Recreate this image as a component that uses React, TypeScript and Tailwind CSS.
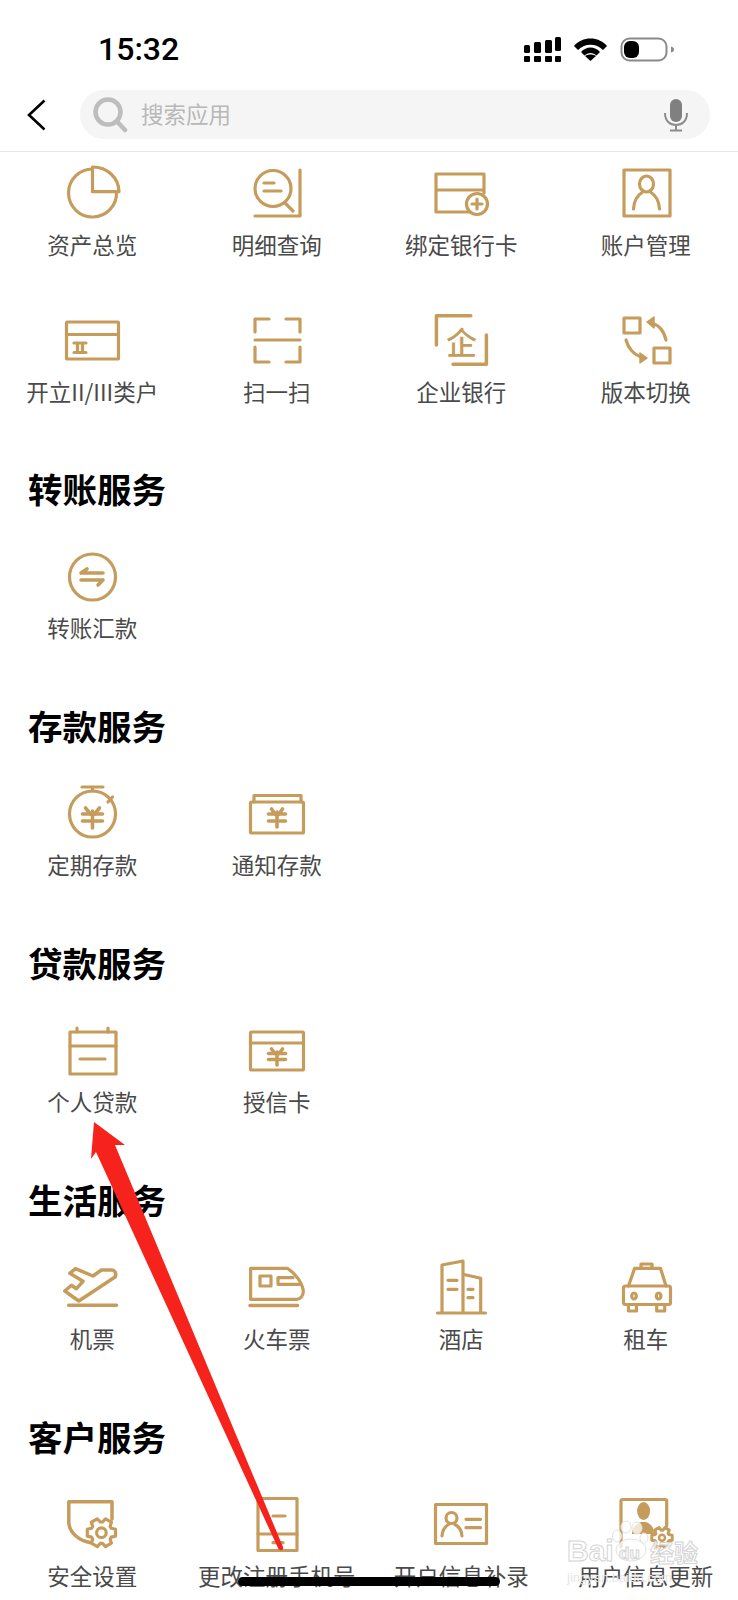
import React from 'react';

const gold = '#c59c5b';

const Glyph = ({ children }: { children: React.ReactNode }) => (
  <svg
    width="60"
    height="60"
    viewBox="0 0 60 60"
    fill="none"
    stroke={gold}
    strokeWidth="3.2"
    strokeLinecap="round"
    strokeLinejoin="round"
  >
    {children}
  </svg>
);

// yen sign used by the deposit / credit icons
const Yen = ({ x, y, w, h, gap }: { x: number; y: number; w: number; h: number; gap: number }) => (
  <g strokeWidth="3.6">
    <path d={`M${x} ${y + 4} V${y + h}`} />
    <path d={`M${x - w} ${y + h / 2 - gap / 2} H${x + w}`} />
    <path d={`M${x - w} ${y + h / 2 + gap / 2} H${x + w}`} />
    <path d={`M${x - w + 3} ${y + 1} L${x - 2} ${y + h / 2 - gap / 2}`} />
    <path d={`M${x + w - 3} ${y + 1} L${x + 2} ${y + h / 2 - gap / 2}`} />
  </g>
);

// outline of a six lobed cog
const gearPath = (cx: number, cy: number, outer: number, inner: number) => {
  const pts: string[] = [];
  for (let i = 0; i < 6; i++) {
    const a = (Math.PI / 3) * i;
    const at = (r: number, d: number) =>
      `${(cx + r * Math.cos(a + d)).toFixed(1)} ${(cy + r * Math.sin(a + d)).toFixed(1)}`;
    pts.push(`${i === 0 ? 'M' : 'L'}${at(inner, -0.42)}`, `L${at(outer, -0.24)}`, `L${at(outer, 0.24)}`, `L${at(inner, 0.42)}`);
  }
  return pts.join(' ') + 'Z';
};

const icons: Record<string, React.ReactNode> = {
  pie: (
    <>
      <path d="M30.5 9A24 24 0 1 0 54.5 32" />
      <path d="M30.5 7V31.7H57A26 25 0 0 0 30.5 7Z" />
    </>
  ),
  detail: (
    <>
      <circle cx="26" cy="28.5" r="18" />
      <path d="M17 23H27M17 31H34M38 43L46 51M53 10V56H8" />
    </>
  ),
  card: (
    <>
      <path d="M44 52H5V14H53V33M5 30H53" />
      <circle cx="46" cy="44" r="10.5" fill="#fff" />
      <path d="M41 44H51M46 39V49" />
    </>
  ),
  account: (
    <>
      <rect x="8" y="10" width="46" height="46" />
      <ellipse cx="30.5" cy="24" rx="7" ry="8" />
      <path d="M17.5 49C18 40 22 35 26 32.5M43.5 49C43 40 39 35 35 32.5" />
    </>
  ),
  classII: (
    <>
      <rect x="4.5" y="15" width="52" height="37" rx="1" />
      <path d="M4.5 27.5H56.5M12 36H24M12 45.5H24M15.5 36V45.5M20.5 36V45.5" />
    </>
  ),
  scan: <path d="M22 12H8V25M39 12H53V25M8 33H53M8 40V55H22M53 40V55H39" />,
  company: (
    <>
      <path d="M39.8 8.7H5.4V38M55.4 28V57.3H22" strokeWidth="3.5" />
      <text
        x="30.4"
        y="47"
        textAnchor="middle"
        fontSize="31"
        fontWeight="500"
        fill={gold}
        stroke="none"
        fontFamily='"Noto Sans CJK SC", sans-serif'
      >
        企
      </text>
    </>
  ),
  swap: (
    <>
      <rect x="8" y="11" width="16" height="15" />
      <rect x="38" y="41" width="16" height="15" />
      <path d="M35 16C43 18 48 24 50 33M10 33C12 41 18 48 26 50" />
      <path d="M31 15L38 10V21Z" fill={gold} strokeWidth="1.5" />
      <path d="M31 51L24 46V56Z" fill={gold} strokeWidth="1.5" />
    </>
  ),
  transfer: (
    <>
      <circle cx="30.5" cy="31" r="23" />
      <path d="M19 27H41M19 27L25 23M19 34H41M41 34L36 39" strokeWidth="3.6" />
    </>
  ),
  timer: (
    <>
      <circle cx="30.5" cy="31" r="23" />
      <path d="M20 4H41M30.5 4V8M46 19L50.5 14" />
      <Yen x={30.5} y={24} w={10} h={21} gap={7} />
    </>
  ),
  notice: (
    <>
      <rect x="3.5" y="19" width="53" height="31" rx="1" />
      <path d="M7 19V12.5H54V19" />
      <Yen x={30} y={25} w={8.5} h={19} gap={7} />
    </>
  ),
  loan: (
    <>
      <rect x="8" y="12" width="46" height="42" />
      <path d="M8 26H54M18 39H43M15 8V12M46 8V12" />
    </>
  ),
  credit: (
    <>
      <rect x="3.5" y="12" width="53" height="38" rx="1" />
      <path d="M3.5 23H56.5" />
      <Yen x={30} y={28} w={8.5} h={17} gap={6} />
    </>
  ),
  plane: (
    <>
      <path d="M13.4 11.7L7.8 16.3L21 24.3L14.4 31.7L9.4 28.3L2.8 34L16.8 44L53.4 19.7C54.5 16 52.5 13 50 13H39.4L31 19Z" strokeWidth="3.5" />
      <path d="M6.8 48.3H54.4" strokeWidth="3.6" />
    </>
  ),
  train: (
    <>
      <path d="M3.6 11.3H40.3C48 16 55.5 26 56.3 34C56.5 39 53 42.3 50 42.3H3.6Z" />
      <rect x="13" y="19" width="11" height="10" />
      <path d="M46 20.7H31V27.3H52" />
      <path d="M3 48.5H50.5" strokeWidth="3.5" />
    </>
  ),
  hotel: (
    <>
      <path d="M11 56V8L32 4V56M32 17.3L49.7 21.3V56M6.5 56H54.5" />
      <path d="M17 23.3H26M17 32.3H26M37 32.3H42M37 40.7H42" />
    </>
  ),
  taxi: (
    <>
      <path d="M25 11V7H36V11M12.5 29L18.6 11.3H44.5L50 29" />
      <rect x="7.5" y="29" width="47" height="18.5" rx="2" />
      <ellipse cx="18" cy="39" rx="2.3" ry="3" />
      <ellipse cx="42.6" cy="39" rx="2.3" ry="3" />
      <path d="M12.5 47.5V54H20.5V47.5M40.7 47.5V54H48.7V47.5" />
    </>
  ),
  shield: (
    <>
      <path d="M50 25V7.7H6.8V28.7C7.5 38 16 47 29.4 48.7" strokeWidth="3.5" />
      <path d={gearPath(39.4, 38.7, 14.5, 10.8)} fill="#fff" strokeWidth="3.2" />
      <circle cx="39.4" cy="38.7" r="4.8" strokeWidth="3.2" />
    </>
  ),
  phone: (
    <>
      <rect x="11" y="4.5" width="39" height="52" />
      <path d="M11 40H50M26 22H38M26 48.7H36" />
    </>
  ),
  idcard: (
    <>
      <rect x="4.5" y="10.5" width="51" height="39" />
      <circle cx="20.5" cy="24" r="5.5" />
      <path d="M11 42C11.5 35 15 32 17.5 30.5M31 42C30.5 35 27 32 24 30.5M35 25.3H49.5M35 33.7H49.5" />
    </>
  ),
  userUpdate: (
    <>
      <path d="M5 53V7C5 6 6 5.5 7 5.5H49C50 5.5 50.7 6 50.7 7V32" />
      <ellipse cx="27.6" cy="17" rx="6.5" ry="9" fill={gold} stroke="none" />
      <path d="M16 40C16 33 20 30 25 28H30C35 30 38 33 38 40Z" fill={gold} stroke="none" />
      <path d={gearPath(46, 43.7, 10.5, 7.5)} fill="#fff" strokeWidth="3" />
      <circle cx="46" cy="43.7" r="3" strokeWidth="2.5" />
    </>
  ),
};

const Item = ({ icon, label, labelClass }: { icon: string; label: string; labelClass: string }) => (
  <div className="flex h-[99px] flex-col items-center">
    <div className="h-[60px] w-[60px]">
      <Glyph>{icons[icon]}</Glyph>
    </div>
    <div className={`h-[30px] whitespace-nowrap text-[22.5px] leading-[30px] text-[#4a4a4a] ${labelClass}`}>
      {label}
    </div>
  </div>
);

const Section = ({ title, items }: { title: string; items: [string, string][] }) => (
  <section className="pt-[60px]">
    <h2 className="mb-[38px] h-[40px] pl-[28px] text-[34.5px] font-bold leading-[40px] text-black">
      {title}
    </h2>
    <div className="grid grid-cols-4">
      {items.map(([icon, label]) => (
        <Item key={label} icon={icon} label={label} labelClass="mt-[6px]" />
      ))}
    </div>
  </section>
);

const StatusIcons = () => (
  <svg width="150" height="25" viewBox="0 0 150 25">
    <g fill="#000">
      <rect x="0" y="8" width="6" height="8" rx="1.5" />
      <rect x="10" y="5" width="7" height="11" rx="1.5" />
      <rect x="21" y="3" width="7" height="13" rx="1.5" />
      <rect x="31" y="0" width="6" height="14" rx="1.5" />
      <rect x="0" y="19" width="6" height="6" rx="1" />
      <rect x="10" y="19" width="7" height="6" rx="1" />
      <rect x="21" y="19" width="7" height="6" rx="1" />
      <rect x="31" y="19" width="6" height="6" rx="1" />
      <path d="M50 9C58 -1 75 -1 83 9L79 13C72 6 61 6 54 13Z" />
      <path d="M57 15C62 9 71 9 76 15L72.5 18.5C69 15 64 15 60.5 18.5Z" />
      <path d="M66.5 24L61 19C64 17 69 17 72 19Z" />
    </g>
    <rect x="97.5" y="1.5" width="45" height="22" rx="8" fill="#fff" stroke="#8a8a8a" strokeWidth="2" />
    <rect x="100" y="4" width="15" height="17" rx="6" fill="#000" />
    <path d="M147 9.5C149 10 150 11 150 12.5C150 14 149 15 147 15.5Z" fill="#8a8a8a" />
  </svg>
);

const Watermark = () => (
  <div className="absolute left-[565px] top-[1520px] h-[70px] w-[140px] select-none">
    <svg className="absolute left-[46px] top-[0px]" width="38" height="42" viewBox="0 0 38 42">
      <g fill="#fff" fillOpacity="0.75" stroke="#e2e2e2" strokeWidth="1">
        <ellipse cx="6" cy="16" rx="4.5" ry="6" />
        <ellipse cx="15" cy="7" rx="5" ry="6" />
        <ellipse cx="26" cy="8" rx="5" ry="6" />
        <ellipse cx="33" cy="18" rx="4" ry="5" />
        <ellipse cx="20" cy="30" rx="15" ry="11" />
      </g>
    </svg>
    <span className="absolute left-[2px] top-[14px] text-[30px] font-bold leading-[34px] text-white/80 [-webkit-text-stroke:1px_#d4d4d4] [font-family:'Liberation_Sans',sans-serif]">
      Bai
    </span>
    <span className="absolute left-[54px] top-[24px] text-[17px] font-bold leading-[20px] text-white/80 [-webkit-text-stroke:1px_#d4d4d4] [font-family:'Liberation_Sans',sans-serif]">
      du
    </span>
    <span className="absolute left-[85px] top-[19px] text-[24px] font-bold leading-[26px] text-white/80 [-webkit-text-stroke:1px_#d4d4d4]">
      经验
    </span>
    <span className="absolute left-[2px] top-[50px] text-[13px] leading-[16px] text-[#e6e6e6] [font-family:'Liberation_Sans',sans-serif]">
      jingyan.baidu.com
    </span>
  </div>
);

const App = () => {
  return (
    <div
      style={{ fontFamily: '"Noto Sans CJK SC", "Noto Sans", sans-serif' }}
      className="relative h-[1600px] w-[738px] overflow-hidden bg-white"
    >
      {/* status bar */}
      <div className="flex items-start justify-between pb-[28px] pl-[98px] pr-[64px] pt-[37px]">
        <span className="text-[32px] font-medium leading-[25px] text-black [font-family:Roboto,sans-serif]">
          15:32
        </span>
        <StatusIcons />
      </div>

      {/* search header */}
      <div className="flex items-center border-b border-[#e6e6e6] pb-[12px] pl-[26px] pr-[28px]">
        <svg width="22" height="32" viewBox="0 0 22 32" fill="none" stroke="#000" strokeWidth="2.6">
          <path d="M18.5 1.5L3 16L18.5 30.5" />
        </svg>
        <div className="ml-[32px] flex h-[49px] flex-1 items-center rounded-[24px] bg-[#f5f5f5] pl-[13px] pr-[21px]">
          <svg width="36" height="36" viewBox="0 0 36 36" fill="none" stroke="#bdbdbd" strokeWidth="4.5" strokeLinecap="round">
            <circle cx="15" cy="15" r="12.5" />
            <path d="M24.5 25L32 33" />
          </svg>
          <span className="mb-[4px] ml-[12px] flex-1 text-[22.5px] leading-[28px] text-[#b8b8b8]">搜索应用</span>
          <svg width="26" height="34" viewBox="0 0 26 34">
            <rect x="7" y="1" width="12" height="23" rx="6" fill="#808080" />
            <path d="M2 15C2 23 7 27 13 27C19 27 24 23 24 15M13 27V32M7 32.5H19" fill="none" stroke="#8c8c8c" strokeWidth="2" />
          </svg>
        </div>
      </div>

      {/* top shortcuts */}
      <div className="grid grid-cols-4 gap-y-[48px] pb-[2px] pt-[8px]">
        <Item icon="pie" label="资产总览" labelClass="mt-[9px]" />
        <Item icon="detail" label="明细查询" labelClass="mt-[9px]" />
        <Item icon="card" label="绑定银行卡" labelClass="mt-[9px]" />
        <Item icon="account" label="账户管理" labelClass="mt-[9px]" />
        <Item icon="classII" label="开立II/III类户" labelClass="mt-[9px]" />
        <Item icon="scan" label="扫一扫" labelClass="mt-[9px]" />
        <Item icon="company" label="企业银行" labelClass="mt-[9px]" />
        <Item icon="swap" label="版本切换" labelClass="mt-[9px]" />
      </div>

      <Section title="转账服务" items={[['transfer', '转账汇款']]} />
      <Section
        title="存款服务"
        items={[
          ['timer', '定期存款'],
          ['notice', '通知存款'],
        ]}
      />
      <Section
        title="贷款服务"
        items={[
          ['loan', '个人贷款'],
          ['credit', '授信卡'],
        ]}
      />
      <Section
        title="生活服务"
        items={[
          ['plane', '机票'],
          ['train', '火车票'],
          ['hotel', '酒店'],
          ['taxi', '租车'],
        ]}
      />
      <Section
        title="客户服务"
        items={[
          ['shield', '安全设置'],
          ['phone', '更改注册手机号'],
          ['idcard', '开户信息补录'],
          ['userUpdate', '用户信息更新'],
        ]}
      />

      <Watermark />

      {/* red annotation arrow */}
      <svg className="pointer-events-none absolute left-0 top-0" width="738" height="1600" viewBox="0 0 738 1600">
        <path
          d="M94 1122L125 1145L115 1145L283 1547C284 1551 279 1551 278 1548L96 1152L91 1159Z"
          fill="#f5231c"
        />
      </svg>

      {/* home indicator */}
      <div className="absolute left-[238px] top-[1577px] h-[9px] w-[262px] rounded-full bg-black" />
    </div>
  );
};

export default App;
